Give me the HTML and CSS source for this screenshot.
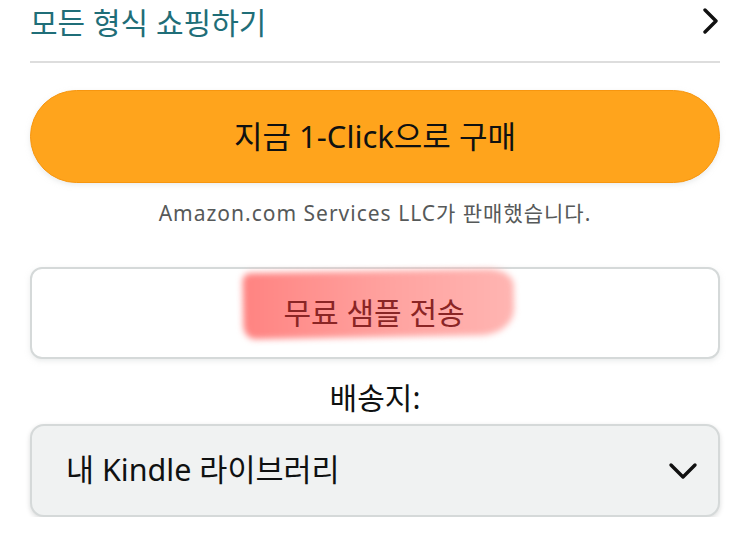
FILE: index.html
```html
<!DOCTYPE html>
<html lang="ko">
<head>
    <meta charset="UTF-8">
    <meta name="viewport" content="width=device-width, initial-scale=1.0">
    <title>Kindle 구매</title>

    <link rel="stylesheet" href="styles.css">
</head>
<body>
    <main class="buy-box">
        <a class="formats-link" href="#">
            <span>모든 형식 쇼핑하기</span>
            <svg class="chevron" width="18" height="26" viewBox="0 0 18 26" aria-hidden="true">
                <path d="M3 2 L14 13 L3 24" fill="none" stroke="#111" stroke-width="3.4" stroke-linecap="round" stroke-linejoin="round"/>
            </svg>
        </a>

        <button class="btn btn-buy" type="button">지금 1-Click으로 구매</button>
        <p class="seller">Amazon.com Services LLC가 판매했습니다.</p>

        <button class="btn btn-sample" type="button">
            <span class="marker">무료 샘플 전송</span>
        </button>

        <label class="deliver-label" for="deliver">배송지:</label>
        <div class="select-box" id="deliver">
            <span>내 Kindle 라이브러리</span>
            <svg class="chevron-down" width="30" height="20" viewBox="0 0 30 20" aria-hidden="true">
                <path d="M3 4 L15 16 L27 4" fill="none" stroke="#111" stroke-width="3.4" stroke-linecap="round" stroke-linejoin="round"/>
            </svg>
        </div>
    </main>
</body>
</html>
```

FILE: styles.css
```css
:root {
    --side: 30px;
    --border: #d5d9d9;
}

* {
    box-sizing: border-box;
}

body {
    margin: 0;
    background: #fff;
    font-family: "Noto Sans", "Noto Sans CJK KR", sans-serif;
    color: #0f1111;
}

.buy-box {
    display: flex;
    flex-direction: column;
    padding: 0 26px 0 var(--side);
}

.formats-link {
    display: flex;
    align-items: center;
    justify-content: space-between;
    height: 63px;
    padding-bottom: 20px;
    border-bottom: 2px solid #dddddd;
    color: #1f6e78;
    text-decoration: none;
    font-size: 30px;
}

.btn {
    width: 100%;
    padding-bottom: 6px;
    font-family: inherit;
    cursor: pointer;
}

.btn-buy {
    margin-top: 27px;
    height: 93px;
    border: 1px solid #f7960f;
    border-radius: 47px;
    background: #ffa41c;
    color: #0f1111;
    font-size: 31px;
    box-shadow: 0 2px 5px rgba(213, 217, 217, 0.5);
}

.seller {
    margin: 16px 0 0;
    line-height: 28px;
    text-align: center;
    color: #565959;
    font-size: 21px;
    letter-spacing: 1px;
}

.btn-sample {
    position: relative;
    z-index: 0;
    margin-top: 40px;
    height: 92px;
    border: 2px solid var(--border);
    border-radius: 12px;
    background: #fff;
    color: #8a2525;
    font-size: 30px;
    box-shadow: 0 2px 5px rgba(213, 217, 217, 0.5);
}

/* brush-stroke highlight behind the sample label */
.marker {
    position: relative;
    display: inline-block;
    padding: 12px 52px 12px 42px;
    transform: translateX(4px);

    &::before {
        content: "";
        position: absolute;
        top: -6px;
        bottom: 8px;
        left: 2px;
        right: 2px;
        z-index: -1;
        background: linear-gradient(90deg, #ff8381, #ffa3a0 55%, #ffb5b2);
        border-radius: 8px 26px 34px 12px / 8px 16px 26px 14px;
        transform: rotate(-1deg);
        filter: blur(3px);
    }
}

.deliver-label {
    margin-top: 15px;
    text-align: center;
    font-size: 30px;
}

.select-box {
    display: flex;
    align-items: center;
    justify-content: space-between;
    margin-top: 6px;
    height: 93px;
    padding: 0 20px 5px 34px;
    border: 2px solid var(--border);
    border-radius: 14px;
    background: #f0f2f2;
    font-size: 30.5px;
    box-shadow: 0 2px 5px rgba(15, 17, 17, 0.15);

    & .chevron-down {
        margin-top: 5px;
    }
}
```
